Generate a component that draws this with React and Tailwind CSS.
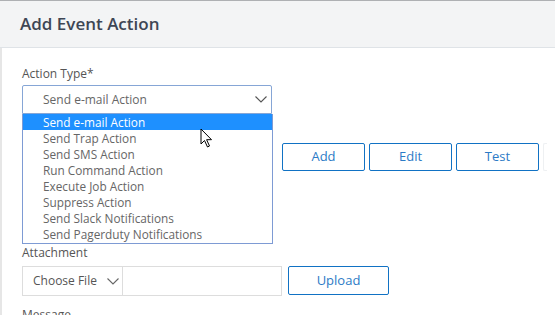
import React from 'react';

const options = [
  'Send e-mail Action',
  'Send Trap Action',
  'Send SMS Action',
  'Run Command Action',
  'Execute Job Action',
  'Suppress Action',
  'Send Slack Notifications',
  'Send Pagerduty Notifications',
];

const Chevron = ({ className }) => (
  <svg width="12" height="7" viewBox="0 0 12 7" className={className}>
    <path d="M0.5 0.5 L6 6 L11.5 0.5" fill="none" stroke="currentColor" strokeWidth="1.1" />
  </svg>
);

const Cursor = () => (
  <svg width="14" height="21" viewBox="0 0 14 21" className="absolute left-[178px] top-[43px] z-20">
    <path d="M1 1 L1 16 L4.5 12.5 L7.5 19 L9.5 18 L6.6 11.7 L11.5 11.7 Z" fill="#fff" stroke="#000" strokeWidth="1" strokeLinejoin="round" />
  </svg>
);

const OutlineButton = ({ children, className = '' }) => (
  <button className={`h-[28px] rounded-[2px] border border-[#1172c4] bg-white text-[13px] text-[#2c7bc6] ${className}`}>
    {children}
  </button>
);

const App = () => {
  return (
    <div className="h-[315px] w-[555px] overflow-hidden bg-white font-['Open_Sans',sans-serif]">
      <div className="border-t border-[#aeb0b3]">
        <div className="flex h-[47px] items-center border-b border-[#dfe3e7] bg-[#f3f4f5] pl-[20px]">
          <h1 className="text-[17px] font-semibold text-[#3e4654]">Add Event Action</h1>
        </div>
        <div className="flex">
          <div className="w-[2px] self-stretch bg-[#e6e6e6]" />
          <div className="relative flex-1 pl-[20px] pt-[18px]">
            <label className="block text-[12px] leading-[16px] text-[#555]">Action Type*</label>
            <div className="relative mt-[3px] w-[250px]">
              <div className="flex h-[29px] items-center justify-between rounded-t-[2px] border border-[#86a6d6] pl-[20px] pr-[4px]">
                <span className="text-[12px] text-[#666]">Send e-mail Action</span>
                <Chevron className="text-[#555]" />
              </div>
              <ul className="absolute left-0 top-[29px] z-10 w-[251px] border border-t-0 border-[#7e9bd4] bg-white pb-[1px]">
                {options.map((o, i) => (
                  <li
                    key={o}
                    className={`h-[16px] pl-[20px] text-[11.8px] leading-[16px] ${i === 0 ? 'bg-[#1e90ff] text-white' : 'text-[#666]'}`}
                  >
                    {o}
                  </li>
                ))}
              </ul>
              <Cursor />
            </div>
            <div className="mt-[29px] flex gap-[4px] pl-[260px]">
              <OutlineButton className="w-[83px]">Add</OutlineButton>
              <OutlineButton className="w-[83px]">Edit</OutlineButton>
              <OutlineButton className="w-[83px]">Test</OutlineButton>
              <div className="h-[28px] w-[4px] rounded-l-[2px] border border-r-0 border-[#eef0f2]" />
            </div>
            <label className="mt-[74px] block text-[12px] leading-[16px] text-[#555]">Attachment</label>
            <div className="mt-[5px] flex items-start gap-[6px]">
              <div className="flex h-[30px] w-[260px] border border-[#ddd]">
                <div className="flex w-[100px] items-center gap-[10px] border-r border-[#ddd] pl-[10px]">
                  <span className="text-[12px] text-[#555]">Choose File</span>
                  <Chevron className="text-[#666]" />
                </div>
              </div>
              <OutlineButton className="h-[29px] w-[101px]">Upload</OutlineButton>
            </div>
            <label className="mt-[11px] block text-[12px] leading-[16px] text-[#555]">Message</label>
          </div>
        </div>
      </div>
    </div>
  );
};

export default App;
